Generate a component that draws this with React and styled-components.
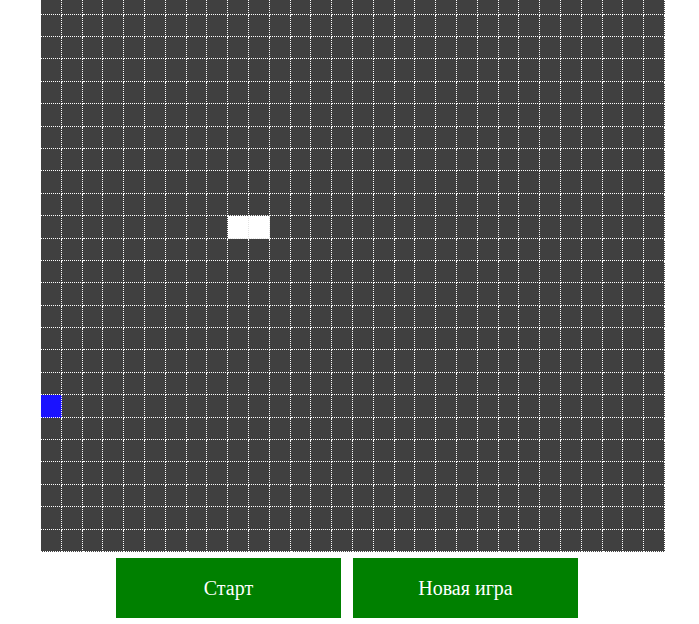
import React from "react";
import styled, { createGlobalStyle } from "styled-components";

const COLS = 30;
const ROWS = 25;
const SNAKE = [
  [10, 9],
  [10, 10],
];
const FOOD = [18, 0];

const Global = createGlobalStyle`
  html, body { margin: 0; padding: 0; background: #ffffff; overflow: hidden; }
  body { font-family: "Liberation Serif", "Times New Roman", serif; }
`;

const Page = styled.div`
  display: flex;
  flex-direction: column;
  padding-left: 41px;
`;

const Board = styled.div`
  display: grid;
  grid-template-columns: repeat(${COLS}, 20.8px);
  grid-template-rows: repeat(${ROWS}, 22.4px);
  width: 624px;
  height: 560px;
  margin-top: -7.8px;
  background: #404040;
`;

const Cell = styled.div`
  box-sizing: border-box;
  border-right: 1px dotted #ffffff;
  border-bottom: 1px dotted #ffffff;
  background: ${(p) =>
    p.$kind === "snake" ? "#ffffff" : p.$kind === "food" ? "#1a12ff" : "transparent"};
  ${(p) => (p.$kind === "snake" ? "border-color: #e2e2e2;" : "")}
`;

const Controls = styled.div`
  display: flex;
  gap: 12px;
  margin-top: 6px;
  padding-left: 75px;
`;

const Button = styled.button`
  width: 225px;
  height: 60px;
  border: none;
  background: #008000;
  color: #ffffff;
  font-family: "Liberation Serif", "Times New Roman", "DejaVu Serif", serif;
  font-size: 20px;
  padding: 0;
  cursor: pointer;
`;

export default function App() {
  const cells = [];
  for (let r = 0; r < ROWS; r++) {
    for (let c = 0; c < COLS; c++) {
      let kind = "empty";
      if (SNAKE.some(([sr, sc]) => sr === r && sc === c)) kind = "snake";
      else if (FOOD[0] === r && FOOD[1] === c) kind = "food";
      cells.push(<Cell key={`${r}-${c}`} $kind={kind} />);
    }
  }
  return (
    <>
      <Global />
      <Page>
        <Board>{cells}</Board>
        <Controls>
          <Button>Старт</Button>
          <Button>Новая игра</Button>
        </Controls>
      </Page>
    </>
  );
}
